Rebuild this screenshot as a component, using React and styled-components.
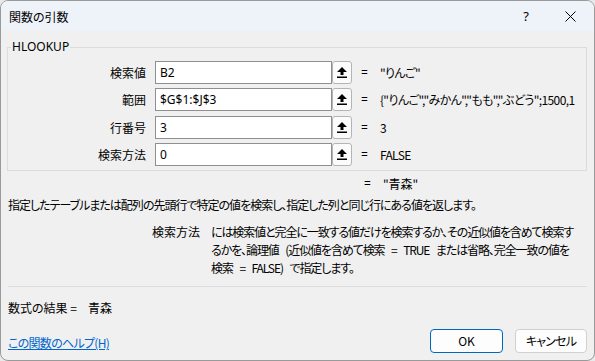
import React from "react"
import styled, { createGlobalStyle } from "styled-components"

const GlobalStyle = createGlobalStyle`
  html, body {
    margin: 0;
    padding: 0;
    background: #e9e9e9;
  }
  body {
    font-family: "Noto Sans CJK JP", "Noto Sans", sans-serif;
    font-size: 12px;
    color: #000000;
    font-feature-settings: "palt";
  }
`

const Window = styled.div`
  width: 595px;
  height: 361px;
  box-sizing: border-box;
  border: 1px solid #9a9a9a;
  border-radius: 8px;
  overflow: hidden;
  background: #f0f0f0;
  display: flex;
  flex-direction: column;
`

const TitleBar = styled.div`
  height: 30px;
  flex: none;
  display: flex;
  align-items: center;
  background: #eef2f9;
  padding-left: 8px;
`

const Title = styled.div`
  flex: 1;
  font-size: 12px;
`

const TitleButton = styled.div`
  width: ${p => p.$w}px;
  height: 30px;
  display: flex;
  align-items: center;
  justify-content: center;
  font-family: "Noto Sans", sans-serif;
  font-size: 13px;
`

const Body = styled.div`
  padding: 0 7px 0 6px;
  display: flex;
  flex-direction: column;
`

const Group = styled.fieldset`
  margin: 8px 0 0;
  padding: 6px 0 4px;
  border: 1px solid #dcdcdc;
  min-width: 0;
`

const Legend = styled.legend`
  margin-left: 3px;
  padding: 0 1px;
  line-height: 16px;
  font-family: "Noto Sans", sans-serif;
  font-size: 12px;
`

const ArgGrid = styled.div`
  display: grid;
  grid-template-columns: 138px 197px 1fr;
  grid-auto-rows: 23px;
  column-gap: 9px;
  row-gap: 4.33px;
  align-items: center;
`

const Label = styled.div`
  text-align: right;
`

const InputWrap = styled.div`
  display: flex;
  height: 23px;
`

const Input = styled.div`
  flex: 1;
  box-sizing: border-box;
  border: 1px solid #8f8f8f;
  background: #ffffff;
  padding-left: 4px;
  line-height: 21px;
  font-family: "Noto Sans", sans-serif;
  white-space: nowrap;
  overflow: hidden;
`

const RefButton = styled.div`
  width: 20px;
  flex: none;
  box-sizing: border-box;
  border: 1px solid #b4b4b4;
  border-radius: 3px;
  background: #fbfbfb;
  display: flex;
  align-items: center;
  justify-content: center;
`

const Value = styled.div`
  display: flex;
  gap: 12px;
  white-space: nowrap;
  overflow: hidden;
  letter-spacing: -0.6px;
`

const Eq = styled.span`
  font-family: "Noto Sans", sans-serif;
  letter-spacing: 0;
`

const ResultLine = styled.div`
  margin-top: 4px;
  padding-left: 357px;
  line-height: 18px;
  display: flex;
  gap: 12px;
`

const Desc = styled.div`
  margin-top: 3px;
  padding-left: 1px;
  line-height: 18px;
  white-space: nowrap;
  letter-spacing: -1px;
`

const ArgHelp = styled.div`
  margin-top: 9px;
  display: grid;
  grid-template-columns: 193px 1fr;
  column-gap: 11px;
  line-height: 18px;
  white-space: nowrap;
`

const ArgHelpName = styled.div`
  text-align: right;
`

const ArgHelpText = styled.div`
  letter-spacing: -1.1px;
  word-spacing: 5px;
`

const Separator = styled.div`
  margin-top: 9px;
  height: 1px;
  background: #dcdcdc;
  margin-left: 1px;
`

const FormulaResult = styled.div`
  margin-top: 12px;
  line-height: 18px;
  display: flex;
  gap: 11px;
  padding-left: 1px;
`

const Footer = styled.div`
  margin-top: 12px;
  display: flex;
  align-items: center;
  gap: 12px;
`

const HelpLink = styled.a`
  flex: 1;
  color: #0066cc;
  text-decoration: underline;
  padding-top: 4px;
  padding-left: 1px;
  letter-spacing: -0.7px;
`

const Button = styled.div`
  width: ${p => p.$w}px;
  height: 24px;
  box-sizing: border-box;
  border: 1px solid ${p => (p.$primary ? "#0067c0" : "#d0d0d0")};
  border-radius: 4px;
  background: #fdfdfd;
  display: flex;
  align-items: center;
  justify-content: center;
  letter-spacing: ${p => (p.$primary ? "0" : "-0.8px")};
`

const UpIcon = () => (
  <svg width="10" height="11" viewBox="0 0 10 11">
    <polygon points="5,0 10,5 6.5,5 6.5,8 3.5,8 3.5,5 0,5" fill="#000" />
    <rect x="0" y="9.5" width="10" height="1.5" fill="#000" />
  </svg>
)

const CloseIcon = () => (
  <svg width="11" height="11" viewBox="0 0 11 11">
    <path d="M0.5 0.5 L10.5 10.5 M10.5 0.5 L0.5 10.5" stroke="#000" strokeWidth="1" />
  </svg>
)

const args = [
  { label: "検索値", input: "B2", value: "\"りんご\"" },
  { label: "範囲", input: "$G$1:$J$3", value: "{\"りんご\",\"みかん\",\"もも\",\"ぶどう\";1500,1" },
  { label: "行番号", input: "3", value: "3" },
  { label: "検索方法", input: "0", value: "FALSE" },
]

export default function App() {
  return (
    <>
      <GlobalStyle />
      <Window>
        <TitleBar>
          <Title>関数の引数</Title>
          <TitleButton $w={40}>?</TitleButton>
          <TitleButton $w={48}>
            <CloseIcon />
          </TitleButton>
        </TitleBar>
        <Body>
          <Group>
            <Legend>HLOOKUP</Legend>
            <ArgGrid>
              {args.map(a => (
                <React.Fragment key={a.label}>
                  <Label>{a.label}</Label>
                  <InputWrap>
                    <Input>{a.input}</Input>
                    <RefButton>
                      <UpIcon />
                    </RefButton>
                  </InputWrap>
                  <Value>
                    <Eq>=</Eq>
                    <span>{a.value}</span>
                  </Value>
                </React.Fragment>
              ))}
            </ArgGrid>
          </Group>
          <ResultLine>
            <Eq>=</Eq>
            <span>"青森"</span>
          </ResultLine>
          <Desc>
            指定したテーブルまたは配列の先頭行で特定の値を検索し、指定した列と同じ行にある値を返します。
          </Desc>
          <ArgHelp>
            <ArgHelpName>検索方法</ArgHelpName>
            <ArgHelpText>
              には検索値と完全に一致する値だけを検索するか、その近似値を含めて検索す
              <br />
              るかを、論理値 (近似値を含めて検索 = TRUE または省略、完全一致の値を
              <br />
              検索 = FALSE) で指定します。
            </ArgHelpText>
          </ArgHelp>
          <Separator />
          <FormulaResult>
            <span>数式の結果 =</span>
            <span>青森</span>
          </FormulaResult>
          <Footer>
            <HelpLink href="#">この関数のヘルプ(H)</HelpLink>
            <Button $primary $w={73}>OK</Button>
            <Button $w={72}>キャンセル</Button>
          </Footer>
        </Body>
      </Window>
    </>
  )
}
